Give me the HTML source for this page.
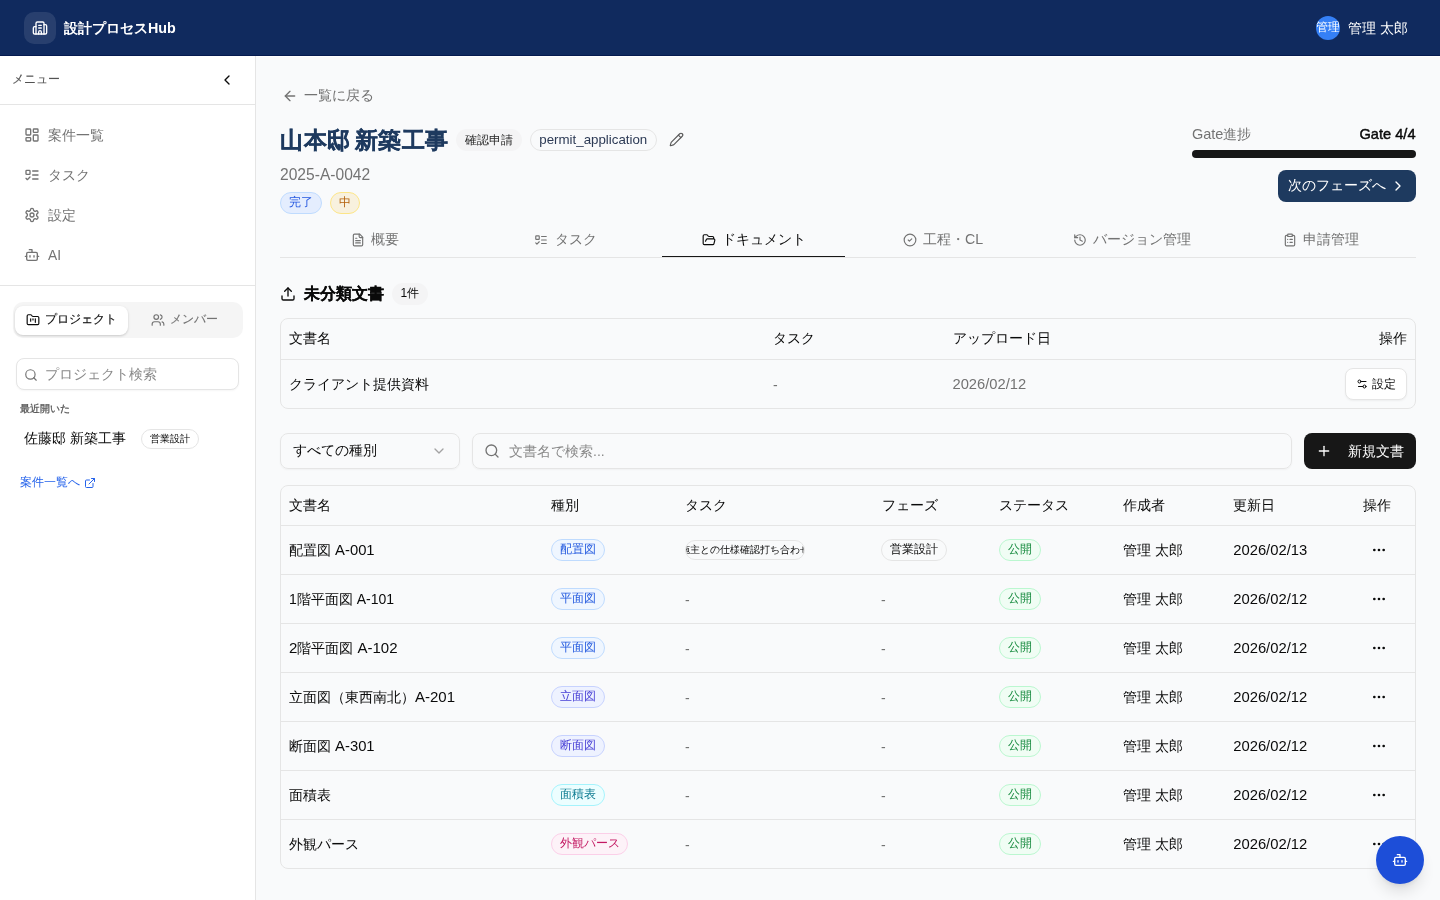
<!DOCTYPE html>
<html lang="ja">
<head>
<meta charset="utf-8">
<title>設計プロセスHub</title>
<style>
*{box-sizing:border-box;margin:0;padding:0}
html,body{width:1440px;height:900px;overflow:hidden}
body{font-family:"Liberation Sans",sans-serif;font-size:14px;color:#0a0a0a;background:#f9fafb;position:relative;will-change:transform}
svg{display:block;fill:none;stroke:currentColor;stroke-width:2;stroke-linecap:round;stroke-linejoin:round}
.t{position:absolute;white-space:nowrap}
.b{position:absolute}
.pill{border-radius:999px;text-align:center;white-space:nowrap}
#hdr{position:absolute;left:0;top:0;width:1440px;height:56px;background:#102a5e;border-bottom:1px solid #051a4f}
#side{position:absolute;left:0;top:56px;width:256px;height:844px;background:#fff;border-right:1px solid #e5e5e5}
</style>
</head>
<body>
<div id="hdr"></div>
<div class="b" style="left:24px;top:12px;width:32px;height:32px;border-radius:10px;background:rgba(255,255,255,.1)"></div>
<svg viewBox="0 0 24 24" style="position:absolute;left:32px;top:20px;width:16px;height:16px;color:#fff;stroke-width:2"><path d="M10 12h4"/><path d="M10 8h4"/><path d="M14 21v-3a2 2 0 0 0-4 0v3"/><path d="M6 10H4a2 2 0 0 0-2 2v7a2 2 0 0 0 2 2h16a2 2 0 0 0 2-2V9a2 2 0 0 0-2-2h-2"/><path d="M6 21V5a2 2 0 0 1 2-2h8a2 2 0 0 1 2 2v16"/></svg>
<div class="t" style="left:64px;top:18.0px;font-size:14px;line-height:20px;color:#fff;font-weight:700">設計プロセス<span style="font-size:14.3px">Hub</span></div>
<div class="b" style="left:1316px;top:16px;width:24px;height:24px;border-radius:12px;background:#3580f6;color:#fff;font-size:12px;line-height:23px;text-align:center;overflow:hidden;white-space:nowrap">管理</div>
<div class="t" style="left:1348px;top:17.6px;font-size:14px;line-height:20px;color:#fff;">管理 太郎</div>
<div id="side"></div>
<div class="t" style="left:12px;top:69.4px;font-size:12.3px;line-height:20px;color:#525252;-webkit-text-stroke:.12px #525252">メニュー</div>
<svg viewBox="0 0 24 24" style="position:absolute;left:219.3px;top:72px;width:16px;height:16px;color:#0a0a0a;stroke-width:2"><path d="m15 18-6-6 6-6"/></svg>
<div class="b" style="left:0px;top:104px;width:255px;height:1px;background:#e5e5e5"></div>
<div class="b" style="left:0px;top:285px;width:255px;height:1px;background:#e5e5e5"></div>
<svg viewBox="0 0 24 24" style="position:absolute;left:24px;top:127px;width:16px;height:16px;color:#737373;stroke-width:2"><rect width="7" height="9" x="3" y="3" rx="1"/><rect width="7" height="5" x="14" y="3" rx="1"/><rect width="7" height="9" x="14" y="12" rx="1"/><rect width="7" height="5" x="3" y="16" rx="1"/></svg>
<div class="t" style="left:48px;top:125.0px;font-size:14px;line-height:20px;color:#737373;">案件一覧</div>
<svg viewBox="0 0 24 24" style="position:absolute;left:24px;top:166.5px;width:16px;height:16px;color:#737373;stroke-width:2"><rect x="3" y="5" width="6" height="6" rx="1"/><path d="m3 17 2 2 4-4"/><path d="M13 6h8"/><path d="M13 12h8"/><path d="M13 18h8"/></svg>
<div class="t" style="left:48px;top:164.5px;font-size:14px;line-height:20px;color:#737373;">タスク</div>
<svg viewBox="0 0 24 24" style="position:absolute;left:24px;top:206.5px;width:16px;height:16px;color:#737373;stroke-width:2"><path d="M12.22 2h-.44a2 2 0 0 0-2 2v.18a2 2 0 0 1-1 1.73l-.43.25a2 2 0 0 1-2 0l-.15-.08a2 2 0 0 0-2.73.73l-.22.38a2 2 0 0 0 .73 2.73l.15.1a2 2 0 0 1 1 1.72v.51a2 2 0 0 1-1 1.74l-.15.09a2 2 0 0 0-.73 2.73l.22.38a2 2 0 0 0 2.73.73l.15-.08a2 2 0 0 1 2 0l.43.25a2 2 0 0 1 1 1.73V20a2 2 0 0 0 2 2h.44a2 2 0 0 0 2-2v-.18a2 2 0 0 1 1-1.73l.43-.25a2 2 0 0 1 2 0l.15.08a2 2 0 0 0 2.73-.73l.22-.39a2 2 0 0 0-.73-2.73l-.15-.08a2 2 0 0 1-1-1.74v-.5a2 2 0 0 1 1-1.74l.15-.09a2 2 0 0 0 .73-2.73l-.22-.38a2 2 0 0 0-2.73-.73l-.15.08a2 2 0 0 1-2 0l-.43-.25a2 2 0 0 1-1-1.73V4a2 2 0 0 0-2-2z"/><circle cx="12" cy="12" r="3"/></svg>
<div class="t" style="left:48px;top:204.5px;font-size:14px;line-height:20px;color:#737373;">設定</div>
<svg viewBox="0 0 24 24" style="position:absolute;left:24px;top:247px;width:16px;height:16px;color:#737373;stroke-width:2"><path d="M12 8V4H8"/><rect width="16" height="12" x="4" y="8" rx="2"/><path d="M2 14h2"/><path d="M20 14h2"/><path d="M15 13v2"/><path d="M9 13v2"/></svg>
<div class="t" style="left:48px;top:245.0px;font-size:14px;line-height:20px;color:#737373;"><span style="font-size:13.8px">AI</span></div>
<div class="b" style="left:12.5px;top:302px;width:230.5px;height:36px;border-radius:10px;background:#f5f5f5"></div>
<div class="b" style="left:15px;top:305.5px;width:113px;height:29px;border-radius:8px;background:#fff;box-shadow:0 1px 3px rgba(0,0,0,.13),0 1px 2px rgba(0,0,0,.06)"></div>
<svg viewBox="0 0 24 24" style="position:absolute;left:25.7px;top:312.5px;width:14px;height:14px;color:#0a0a0a;stroke-width:2"><path d="M4 20h16a2 2 0 0 0 2-2V8a2 2 0 0 0-2-2h-7.93a2 2 0 0 1-1.66-.9l-.82-1.2A2 2 0 0 0 7.93 3H4a2 2 0 0 0-2 2v13c0 1.1.9 2 2 2Z"/><path d="M8 10v4"/><path d="M12 10v2"/><path d="M16 10v6"/></svg>
<div class="t" style="left:45px;top:308.8px;font-size:12px;line-height:20px;color:#0a0a0a;-webkit-text-stroke:.12px #0a0a0a">プロジェクト</div>
<svg viewBox="0 0 24 24" style="position:absolute;left:150.5px;top:312.5px;width:14px;height:14px;color:#737373;stroke-width:2"><path d="M16 21v-2a4 4 0 0 0-4-4H6a4 4 0 0 0-4 4v2"/><circle cx="9" cy="7" r="4"/><path d="M22 21v-2a4 4 0 0 0-3-3.87"/><path d="M16 3.13a4 4 0 0 1 0 7.75"/></svg>
<div class="t" style="left:169.5px;top:308.8px;font-size:12px;line-height:20px;color:#737373;-webkit-text-stroke:.1px #737373">メンバー</div>
<div class="b" style="left:16px;top:358px;width:223px;height:32px;border:1px solid #e5e5e5;border-radius:8px;background:#fff;box-shadow:0 1px 2px rgba(0,0,0,.04)"></div>
<svg viewBox="0 0 24 24" style="position:absolute;left:24.1px;top:368.2px;width:14px;height:14px;color:#737373;stroke-width:2"><circle cx="11" cy="11" r="8"/><path d="m21 21-4.3-4.3"/></svg>
<div class="t" style="left:45px;top:364.3px;font-size:14px;line-height:20px;color:#8a8a8a;">プロジェクト検索</div>
<div class="t" style="left:20px;top:402.2px;font-size:10.1px;line-height:14px;color:#525252;-webkit-text-stroke:.25px #525252">最近開いた</div>
<div class="t" style="left:24px;top:428.0px;font-size:14px;line-height:20px;color:#0a0a0a;">佐藤邸 新築工事</div>
<div class="b pill" style="left:141px;top:429px;width:58px;height:20px;background:#fff;border:1px solid #e5e5e5;color:#0a0a0a;font-size:10px;line-height:18px;">営業設計</div>
<div class="t" style="left:20px;top:472.4px;font-size:12px;line-height:20px;color:#2563eb;">案件一覧へ</div>
<svg viewBox="0 0 24 24" style="position:absolute;left:84px;top:476.6px;width:12px;height:12px;color:#2563eb;stroke-width:2"><path d="M15 3h6v6"/><path d="M10 14 21 3"/><path d="M18 13v6a2 2 0 0 1-2 2H5a2 2 0 0 1-2-2V8a2 2 0 0 1 2-2h6"/></svg>
<div class="b" style="left:256px;top:56px;width:1184px;height:1px;background:#fff"></div>
<svg viewBox="0 0 24 24" style="position:absolute;left:282px;top:88px;width:16px;height:16px;color:#737373;stroke-width:2"><path d="m12 19-7-7 7-7"/><path d="M19 12H5"/></svg>
<div class="t" style="left:304px;top:85.1px;font-size:14px;line-height:20px;color:#737373;">一覧に戻る</div>
<div class="t" style="left:280.3px;top:125.0px;font-size:22.6px;line-height:32px;color:#1e3a5f;font-weight:700;letter-spacing:.4px;word-spacing:-2.2px;-webkit-text-stroke:.3px #1e3a5f">山本邸 新築工事</div>
<div class="b pill" style="left:456px;top:129px;width:65.6px;height:22px;background:#f4f4f5;color:#262626;font-size:12px;line-height:22px;">確認申請</div>
<div class="b pill" style="left:530px;top:129px;width:126.6px;height:22px;background:transparent;border:1px solid #e5e5e5;color:#2c3a55;font-size:13.3px;line-height:20px;">permit_application</div>
<svg viewBox="0 0 24 24" style="position:absolute;left:669px;top:132px;width:15px;height:15px;color:#595959;stroke-width:1.8"><path d="M21.174 6.812a1 1 0 0 0-3.986-3.987L3.842 16.174a2 2 0 0 0-.5.83l-1.321 4.352a.5.5 0 0 0 .623.622l4.353-1.32a2 2 0 0 0 .83-.497z"/><path d="m15 5 4 4"/></svg>
<div class="t" style="left:280px;top:165.2px;font-size:15.6px;line-height:20px;color:#737373;">2025-A-0042</div>
<div class="b pill" style="left:280px;top:192px;width:42px;height:21.6px;background:#e4edfe;border:1px solid #bfdbfe;color:#2558e0;font-size:12px;line-height:19.6px;">完了</div>
<div class="b pill" style="left:330px;top:192px;width:30px;height:21.6px;background:#f8f1de;border:1px solid #fce588;color:#b4620e;font-size:12px;line-height:19.6px;">中</div>
<div class="t" style="left:1192px;top:124.0px;font-size:14px;line-height:20px;color:#737373;"><span style="font-size:14.5px">Gate</span>進捗</div>
<div class="t" style="right:24.5px;top:124.0px;font-size:14.6px;line-height:20px;color:#0a0a0a;-webkit-text-stroke:.45px #0a0a0a">Gate 4/4</div>
<div class="b" style="left:1192px;top:150px;width:224px;height:8px;border-radius:4px;background:#171717"></div>
<div class="b" style="left:1278px;top:170px;width:138px;height:32px;border-radius:8px;background:#1e3a5f"></div>
<div class="t" style="left:1287.5px;top:175.3px;font-size:14px;line-height:20px;color:#fff;">次のフェーズへ</div>
<svg viewBox="0 0 24 24" style="position:absolute;left:1390px;top:178.2px;width:16px;height:16px;color:#fff;stroke-width:2"><path d="m9 18 6-6-6-6"/></svg>
<div class="b" style="left:280px;top:257px;width:1136px;height:1px;background:#e5e5e5"></div>
<div class="b" style="left:662px;top:256px;width:183px;height:1.35px;background:#171717"></div>
<svg viewBox="0 0 24 24" style="position:absolute;left:351.3px;top:233px;width:14px;height:14px;color:#737373;stroke-width:2"><path d="M15 2H6a2 2 0 0 0-2 2v16a2 2 0 0 0 2 2h12a2 2 0 0 0 2-2V7Z"/><path d="M14 2v4a2 2 0 0 0 2 2h4"/><path d="M10 9H8"/><path d="M16 13H8"/><path d="M16 17H8"/></svg>
<div class="t" style="left:371px;top:229.4px;font-size:14px;line-height:20px;color:#737373;">概要</div>
<svg viewBox="0 0 24 24" style="position:absolute;left:534px;top:233px;width:14px;height:14px;color:#737373;stroke-width:2"><rect x="3" y="5" width="6" height="6" rx="1"/><path d="m3 17 2 2 4-4"/><path d="M13 6h8"/><path d="M13 12h8"/><path d="M13 18h8"/></svg>
<div class="t" style="left:555px;top:229.4px;font-size:14px;line-height:20px;color:#737373;">タスク</div>
<svg viewBox="0 0 24 24" style="position:absolute;left:702px;top:233px;width:14px;height:14px;color:#0a0a0a;stroke-width:2"><path d="m6 14 1.5-2.9A2 2 0 0 1 9.24 10H20a2 2 0 0 1 1.94 2.5l-1.54 6a2 2 0 0 1-1.95 1.5H4a2 2 0 0 1-2-2V5a2 2 0 0 1 2-2h3.9a2 2 0 0 1 1.69.9l.81 1.2a2 2 0 0 0 1.67.9H18a2 2 0 0 1 2 2v2"/></svg>
<div class="t" style="left:722.3px;top:229.4px;font-size:14px;line-height:20px;color:#0a0a0a;">ドキュメント</div>
<svg viewBox="0 0 24 24" style="position:absolute;left:903px;top:233px;width:14px;height:14px;color:#737373;stroke-width:2"><circle cx="12" cy="12" r="10"/><path d="m9 12 2 2 4-4"/></svg>
<div class="t" style="left:923px;top:229.4px;font-size:14px;line-height:20px;color:#737373;">工程・<span style="font-size:14.2px">CL</span></div>
<svg viewBox="0 0 24 24" style="position:absolute;left:1072.5px;top:233px;width:14px;height:14px;color:#737373;stroke-width:2"><path d="M3 12a9 9 0 1 0 9-9 9.75 9.75 0 0 0-6.74 2.74L3 8"/><path d="M3 3v5h5"/><path d="M12 7v5l4 2"/></svg>
<div class="t" style="left:1093px;top:229.4px;font-size:14px;line-height:20px;color:#737373;">バージョン管理</div>
<svg viewBox="0 0 24 24" style="position:absolute;left:1283px;top:233px;width:14px;height:14px;color:#737373;stroke-width:2"><rect width="8" height="4" x="8" y="2" rx="1" ry="1"/><path d="M16 4h2a2 2 0 0 1 2 2v14a2 2 0 0 1-2 2H6a2 2 0 0 1-2-2V6a2 2 0 0 1 2-2h2"/><path d="M12 11h4"/><path d="M12 16h4"/><path d="M8 11h.01"/><path d="M8 16h.01"/></svg>
<div class="t" style="left:1303px;top:229.4px;font-size:14px;line-height:20px;color:#737373;">申請管理</div>
<svg viewBox="0 0 24 24" style="position:absolute;left:280px;top:286px;width:16px;height:16px;color:#0a0a0a;stroke-width:2"><path d="M21 15v4a2 2 0 0 1-2 2H5a2 2 0 0 1-2-2v-4"/><path d="m17 8-5-5-5 5"/><path d="M12 3v12"/></svg>
<div class="t" style="left:304.3px;top:281.8px;font-size:15.8px;line-height:24px;color:#0a0a0a;font-weight:700;-webkit-text-stroke:.2px #0a0a0a">未分類文書</div>
<div class="b pill" style="left:391.7px;top:283.1px;width:36.3px;height:21.8px;background:#f4f4f5;color:#0a0a0a;font-size:12px;line-height:21.8px;"><span style="font-size:12px">1</span>件</div>
<div class="b" style="left:280px;top:318px;width:1136px;height:91px;border:1px solid #e5e5e5;border-radius:8px"></div>
<div class="b" style="left:281px;top:359px;width:1134px;height:1px;background:#e5e5e5"></div>
<div class="t" style="left:289px;top:328.3px;font-size:14px;line-height:20px;color:#0a0a0a;">文書名</div>
<div class="t" style="left:773px;top:328.3px;font-size:14px;line-height:20px;color:#0a0a0a;">タスク</div>
<div class="t" style="left:952.5px;top:328.3px;font-size:14px;line-height:20px;color:#0a0a0a;">アップロード日</div>
<div class="t" style="right:33px;top:328.3px;font-size:14px;line-height:20px;color:#0a0a0a;">操作</div>
<div class="t" style="left:289px;top:373.9px;font-size:14px;line-height:20px;color:#0a0a0a;">クライアント提供資料</div>
<div class="t" style="left:773px;top:374.7px;font-size:14px;line-height:20px;color:#737373;">-</div>
<div class="t" style="left:952.5px;top:373.9px;font-size:14.73px;line-height:20px;color:#737373;">2026/02/12</div>
<div class="b" style="left:1345px;top:368px;width:61.6px;height:32px;border:1px solid #e5e5e5;border-radius:8px;background:#fff;box-shadow:0 1px 2px rgba(0,0,0,.05)"></div>
<svg viewBox="0 0 24 24" style="position:absolute;left:1356.2px;top:378px;width:12px;height:12px;color:#0a0a0a;stroke-width:2"><path d="M20 7h-9"/><path d="M14 17H5"/><circle cx="17" cy="17" r="3"/><circle cx="7" cy="7" r="3"/></svg>
<div class="t" style="left:1372px;top:373.8px;font-size:12px;line-height:20px;color:#0a0a0a;">設定</div>
<div class="b" style="left:280px;top:433px;width:180px;height:36px;border:1px solid #e5e5e5;border-radius:8px;box-shadow:0 1px 2px rgba(0,0,0,.04)"></div>
<div class="t" style="left:293px;top:440.1px;font-size:14px;line-height:20px;color:#0a0a0a;">すべての種別</div>
<svg viewBox="0 0 24 24" style="position:absolute;left:431px;top:443.4px;width:16px;height:16px;color:#a3a3a3;stroke-width:2"><path d="m6 9 6 6 6-6"/></svg>
<div class="b" style="left:472px;top:433px;width:820px;height:36px;border:1px solid #e5e5e5;border-radius:8px;box-shadow:0 1px 2px rgba(0,0,0,.04)"></div>
<svg viewBox="0 0 24 24" style="position:absolute;left:484px;top:443px;width:16px;height:16px;color:#737373;stroke-width:2"><circle cx="11" cy="11" r="8"/><path d="m21 21-4.3-4.3"/></svg>
<div class="t" style="left:509px;top:440.7px;font-size:14px;line-height:20px;color:#8a8a8a;">文書名で検索...</div>
<div class="b" style="left:1304px;top:433px;width:112px;height:36px;border-radius:8px;background:#171717"></div>
<svg viewBox="0 0 24 24" style="position:absolute;left:1315.7px;top:443px;width:16px;height:16px;color:#fff;stroke-width:2"><path d="M5 12h14"/><path d="M12 5v14"/></svg>
<div class="t" style="left:1347.5px;top:441.0px;font-size:14px;line-height:20px;color:#fff;">新規文書</div>
<div class="b" style="left:280px;top:485px;width:1136px;height:384px;border:1px solid #e5e5e5;border-radius:8px"></div>
<div class="t" style="left:289px;top:494.7px;font-size:14px;line-height:20px;color:#0a0a0a;">文書名</div>
<div class="t" style="left:551px;top:494.7px;font-size:14px;line-height:20px;color:#0a0a0a;">種別</div>
<div class="t" style="left:685px;top:494.7px;font-size:14px;line-height:20px;color:#0a0a0a;">タスク</div>
<div class="t" style="left:881.5px;top:494.7px;font-size:14px;line-height:20px;color:#0a0a0a;">フェーズ</div>
<div class="t" style="left:999px;top:494.7px;font-size:14px;line-height:20px;color:#0a0a0a;">ステータス</div>
<div class="t" style="left:1123px;top:494.7px;font-size:14px;line-height:20px;color:#0a0a0a;">作成者</div>
<div class="t" style="left:1232.5px;top:494.7px;font-size:14px;line-height:20px;color:#0a0a0a;">更新日</div>
<div class="t" style="left:1363px;top:494.7px;font-size:14px;line-height:20px;color:#0a0a0a;">操作</div>
<div class="b" style="left:281px;top:525px;width:1134px;height:1px;background:#e5e5e5"></div>
<div class="t" style="left:289px;top:539.75px;font-size:14px;line-height:20px;color:#0a0a0a;">配置図<span style="font-size:14.8px"> A-001</span></div>
<div class="b pill" style="left:551px;top:539.2px;width:54px;height:21.6px;background:#eff6ff;border:1px solid #bfdbfe;color:#2158df;font-size:12px;line-height:19.6px;">配置図</div>
<div class="b" style="left:685px;top:540.1px;width:120px;height:20px;border:1px solid #e5e5e5;border-radius:10px;overflow:hidden;font-size:10px;line-height:18px;color:#0a0a0a;white-space:nowrap"><span style="position:absolute;left:-6px;top:0">施主との仕様確認打ち合わせ</span></div>
<div class="b pill" style="left:881px;top:539.2px;width:66px;height:21.6px;background:transparent;border:1px solid #e5e5e5;color:#0a0a0a;font-size:12px;line-height:19.6px;">営業設計</div>
<div class="b pill" style="left:999px;top:539.2px;width:42px;height:21.6px;background:#f0fdf4;border:1px solid #bbf7d0;color:#168a3e;font-size:12px;line-height:19.6px;">公開</div>
<div class="t" style="left:1123px;top:539.75px;font-size:14px;line-height:20px;color:#0a0a0a;">管理 太郎</div>
<div class="t" style="left:1233.2px;top:540.4px;font-size:14.8px;line-height:20px;color:#0a0a0a;">2026/02/13</div>
<svg viewBox="0 0 24 24" style="position:absolute;left:1370.5px;top:541.8000000000001px;width:16px;height:16px;color:#0a0a0a;stroke-width:2"><circle cx="12" cy="12" r="1"/><circle cx="19" cy="12" r="1"/><circle cx="5" cy="12" r="1"/></svg>
<div class="b" style="left:281px;top:574px;width:1134px;height:1px;background:#e5e5e5"></div>
<div class="t" style="left:289px;top:588.75px;font-size:14px;line-height:20px;color:#0a0a0a;"><span style="font-size:14px">1</span>階平面図<span style="font-size:14px"> A-101</span></div>
<div class="b pill" style="left:551px;top:588.2px;width:54px;height:21.6px;background:#eff6ff;border:1px solid #bfdbfe;color:#2158df;font-size:12px;line-height:19.6px;">平面図</div>
<div class="t" style="left:685px;top:589.55px;font-size:14px;line-height:20px;color:#737373;">-</div>
<div class="t" style="left:881px;top:589.55px;font-size:14px;line-height:20px;color:#737373;">-</div>
<div class="b pill" style="left:999px;top:588.2px;width:42px;height:21.6px;background:#f0fdf4;border:1px solid #bbf7d0;color:#168a3e;font-size:12px;line-height:19.6px;">公開</div>
<div class="t" style="left:1123px;top:588.75px;font-size:14px;line-height:20px;color:#0a0a0a;">管理 太郎</div>
<div class="t" style="left:1233.2px;top:589.4px;font-size:14.8px;line-height:20px;color:#0a0a0a;">2026/02/12</div>
<svg viewBox="0 0 24 24" style="position:absolute;left:1370.5px;top:590.8000000000001px;width:16px;height:16px;color:#0a0a0a;stroke-width:2"><circle cx="12" cy="12" r="1"/><circle cx="19" cy="12" r="1"/><circle cx="5" cy="12" r="1"/></svg>
<div class="b" style="left:281px;top:623px;width:1134px;height:1px;background:#e5e5e5"></div>
<div class="t" style="left:289px;top:637.75px;font-size:14px;line-height:20px;color:#0a0a0a;"><span style="font-size:15px">2</span>階平面図<span style="font-size:15px"> A-102</span></div>
<div class="b pill" style="left:551px;top:637.2px;width:54px;height:21.6px;background:#eff6ff;border:1px solid #bfdbfe;color:#2158df;font-size:12px;line-height:19.6px;">平面図</div>
<div class="t" style="left:685px;top:638.55px;font-size:14px;line-height:20px;color:#737373;">-</div>
<div class="t" style="left:881px;top:638.55px;font-size:14px;line-height:20px;color:#737373;">-</div>
<div class="b pill" style="left:999px;top:637.2px;width:42px;height:21.6px;background:#f0fdf4;border:1px solid #bbf7d0;color:#168a3e;font-size:12px;line-height:19.6px;">公開</div>
<div class="t" style="left:1123px;top:637.75px;font-size:14px;line-height:20px;color:#0a0a0a;">管理 太郎</div>
<div class="t" style="left:1233.2px;top:638.4px;font-size:14.8px;line-height:20px;color:#0a0a0a;">2026/02/12</div>
<svg viewBox="0 0 24 24" style="position:absolute;left:1370.5px;top:639.8000000000001px;width:16px;height:16px;color:#0a0a0a;stroke-width:2"><circle cx="12" cy="12" r="1"/><circle cx="19" cy="12" r="1"/><circle cx="5" cy="12" r="1"/></svg>
<div class="b" style="left:281px;top:672px;width:1134px;height:1px;background:#e5e5e5"></div>
<div class="t" style="left:289px;top:686.75px;font-size:14px;line-height:20px;color:#0a0a0a;">立面図（東西南北）<span style="font-size:15px">A-201</span></div>
<div class="b pill" style="left:551px;top:686.2px;width:54px;height:21.6px;background:#eef2ff;border:1px solid #c7d2fe;color:#4840d6;font-size:12px;line-height:19.6px;">立面図</div>
<div class="t" style="left:685px;top:687.55px;font-size:14px;line-height:20px;color:#737373;">-</div>
<div class="t" style="left:881px;top:687.55px;font-size:14px;line-height:20px;color:#737373;">-</div>
<div class="b pill" style="left:999px;top:686.2px;width:42px;height:21.6px;background:#f0fdf4;border:1px solid #bbf7d0;color:#168a3e;font-size:12px;line-height:19.6px;">公開</div>
<div class="t" style="left:1123px;top:686.75px;font-size:14px;line-height:20px;color:#0a0a0a;">管理 太郎</div>
<div class="t" style="left:1233.2px;top:687.4px;font-size:14.8px;line-height:20px;color:#0a0a0a;">2026/02/12</div>
<svg viewBox="0 0 24 24" style="position:absolute;left:1370.5px;top:688.8000000000001px;width:16px;height:16px;color:#0a0a0a;stroke-width:2"><circle cx="12" cy="12" r="1"/><circle cx="19" cy="12" r="1"/><circle cx="5" cy="12" r="1"/></svg>
<div class="b" style="left:281px;top:721px;width:1134px;height:1px;background:#e5e5e5"></div>
<div class="t" style="left:289px;top:735.75px;font-size:14px;line-height:20px;color:#0a0a0a;">断面図<span style="font-size:14.8px"> A-301</span></div>
<div class="b pill" style="left:551px;top:735.2px;width:54px;height:21.6px;background:#eef2ff;border:1px solid #c7d2fe;color:#4840d6;font-size:12px;line-height:19.6px;">断面図</div>
<div class="t" style="left:685px;top:736.55px;font-size:14px;line-height:20px;color:#737373;">-</div>
<div class="t" style="left:881px;top:736.55px;font-size:14px;line-height:20px;color:#737373;">-</div>
<div class="b pill" style="left:999px;top:735.2px;width:42px;height:21.6px;background:#f0fdf4;border:1px solid #bbf7d0;color:#168a3e;font-size:12px;line-height:19.6px;">公開</div>
<div class="t" style="left:1123px;top:735.75px;font-size:14px;line-height:20px;color:#0a0a0a;">管理 太郎</div>
<div class="t" style="left:1233.2px;top:736.4px;font-size:14.8px;line-height:20px;color:#0a0a0a;">2026/02/12</div>
<svg viewBox="0 0 24 24" style="position:absolute;left:1370.5px;top:737.8000000000001px;width:16px;height:16px;color:#0a0a0a;stroke-width:2"><circle cx="12" cy="12" r="1"/><circle cx="19" cy="12" r="1"/><circle cx="5" cy="12" r="1"/></svg>
<div class="b" style="left:281px;top:770px;width:1134px;height:1px;background:#e5e5e5"></div>
<div class="t" style="left:289px;top:784.75px;font-size:14px;line-height:20px;color:#0a0a0a;">面積表</div>
<div class="b pill" style="left:551px;top:784.2px;width:54px;height:21.6px;background:#ecfeff;border:1px solid #a5f3fc;color:#0e7c92;font-size:12px;line-height:19.6px;">面積表</div>
<div class="t" style="left:685px;top:785.55px;font-size:14px;line-height:20px;color:#737373;">-</div>
<div class="t" style="left:881px;top:785.55px;font-size:14px;line-height:20px;color:#737373;">-</div>
<div class="b pill" style="left:999px;top:784.2px;width:42px;height:21.6px;background:#f0fdf4;border:1px solid #bbf7d0;color:#168a3e;font-size:12px;line-height:19.6px;">公開</div>
<div class="t" style="left:1123px;top:784.75px;font-size:14px;line-height:20px;color:#0a0a0a;">管理 太郎</div>
<div class="t" style="left:1233.2px;top:785.4px;font-size:14.8px;line-height:20px;color:#0a0a0a;">2026/02/12</div>
<svg viewBox="0 0 24 24" style="position:absolute;left:1370.5px;top:786.8000000000001px;width:16px;height:16px;color:#0a0a0a;stroke-width:2"><circle cx="12" cy="12" r="1"/><circle cx="19" cy="12" r="1"/><circle cx="5" cy="12" r="1"/></svg>
<div class="b" style="left:281px;top:819px;width:1134px;height:1px;background:#e5e5e5"></div>
<div class="t" style="left:289px;top:833.75px;font-size:14px;line-height:20px;color:#0a0a0a;">外観パース</div>
<div class="b pill" style="left:551px;top:833.2px;width:77px;height:21.6px;background:#fdf2f8;border:1px solid #fbcfe8;color:#c31862;font-size:12px;line-height:19.6px;">外観パース</div>
<div class="t" style="left:685px;top:834.55px;font-size:14px;line-height:20px;color:#737373;">-</div>
<div class="t" style="left:881px;top:834.55px;font-size:14px;line-height:20px;color:#737373;">-</div>
<div class="b pill" style="left:999px;top:833.2px;width:42px;height:21.6px;background:#f0fdf4;border:1px solid #bbf7d0;color:#168a3e;font-size:12px;line-height:19.6px;">公開</div>
<div class="t" style="left:1123px;top:833.75px;font-size:14px;line-height:20px;color:#0a0a0a;">管理 太郎</div>
<div class="t" style="left:1233.2px;top:834.4px;font-size:14.8px;line-height:20px;color:#0a0a0a;">2026/02/12</div>
<svg viewBox="0 0 24 24" style="position:absolute;left:1370.5px;top:835.8000000000001px;width:16px;height:16px;color:#0a0a0a;stroke-width:2"><circle cx="12" cy="12" r="1"/><circle cx="19" cy="12" r="1"/><circle cx="5" cy="12" r="1"/></svg>
<div class="b" style="left:1376px;top:836px;width:48px;height:48px;border-radius:24px;background:#1d4ed8;box-shadow:0 10px 15px -3px rgba(0,0,0,.12),0 4px 6px -4px rgba(0,0,0,.12)"></div>
<svg viewBox="0 0 24 24" style="position:absolute;left:1392.2px;top:851.8px;width:16px;height:16px;color:#fff;stroke-width:2"><path d="M12 8V4H8"/><rect width="16" height="12" x="4" y="8" rx="2"/><path d="M2 14h2"/><path d="M20 14h2"/><path d="M15 13v2"/><path d="M9 13v2"/></svg>
</body>
</html>
